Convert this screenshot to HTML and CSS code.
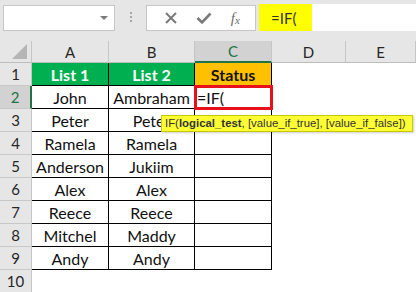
FILE: index.html
```html
<!DOCTYPE html>
<html lang="en">
<head>
    <meta charset="UTF-8">
    <title>IF formula</title>
    <link rel="stylesheet" href="styles.css">
</head>
<body>
    <div class="toolbar">
        <div class="name-box">
            <span class="drop-arrow"></span>
        </div>
        <div class="grip">
            <span></span><span></span><span></span>
        </div>
        <div class="fx-buttons">
            <svg class="icon" width="14" height="14" viewBox="0 0 14 14">
                <path d="M2 2 L12 12 M12 2 L2 12" stroke="#7a7a7a" stroke-width="2" fill="none"/>
            </svg>
            <svg class="icon" width="16" height="14" viewBox="0 0 16 14">
                <path d="M1.5 7 L6 11.5 L14.5 2.5" stroke="#7a7a7a" stroke-width="2.6" fill="none"/>
            </svg>
            <span class="fx">f<sub>x</sub></span>
        </div>
        <div class="formula">
            <span class="formula-text">=IF(</span>
        </div>
    </div>

    <div class="sheet">
        <div class="corner"><span class="corner-tri"></span></div>
        <div class="col-head">A</div>
        <div class="col-head">B</div>
        <div class="col-head selected">C</div>
        <div class="col-head">D</div>
        <div class="col-head">E</div>

        <div class="row-head">1</div>
        <div class="cell head green">List 1</div>
        <div class="cell head green">List 2</div>
        <div class="cell head gold">Status</div>
        <div class="empty"></div>
        <div class="empty"></div>

        <div class="row-head selected">2</div>
        <div class="cell">John</div>
        <div class="cell">Ambraham</div>
        <div class="cell active">=IF(</div>
        <div class="empty"></div>
        <div class="empty"></div>

        <div class="row-head">3</div>
        <div class="cell">Peter</div>
        <div class="cell">Peter</div>
        <div class="cell"></div>
        <div class="empty"></div>
        <div class="empty"></div>

        <div class="row-head">4</div>
        <div class="cell">Ramela</div>
        <div class="cell">Ramela</div>
        <div class="cell"></div>
        <div class="empty"></div>
        <div class="empty"></div>

        <div class="row-head">5</div>
        <div class="cell">Anderson</div>
        <div class="cell">Jukiim</div>
        <div class="cell"></div>
        <div class="empty"></div>
        <div class="empty"></div>

        <div class="row-head">6</div>
        <div class="cell">Alex</div>
        <div class="cell">Alex</div>
        <div class="cell"></div>
        <div class="empty"></div>
        <div class="empty"></div>

        <div class="row-head">7</div>
        <div class="cell">Reece</div>
        <div class="cell">Reece</div>
        <div class="cell"></div>
        <div class="empty"></div>
        <div class="empty"></div>

        <div class="row-head">8</div>
        <div class="cell">Mitchel</div>
        <div class="cell">Maddy</div>
        <div class="cell"></div>
        <div class="empty"></div>
        <div class="empty"></div>

        <div class="row-head">9</div>
        <div class="cell">Andy</div>
        <div class="cell">Andy</div>
        <div class="cell"></div>
        <div class="empty"></div>
        <div class="empty"></div>

        <div class="row-head last">10</div>

        <div class="tooltip">IF(<b>logical_test</b>, [value_if_true], [value_if_false])</div>
    </div>
</body>
</html>
```

FILE: styles.css
```css
body {
    margin: 0;
    width: 416px;
    height: 292px;
    overflow: hidden;
    background: white;
    font-family: Lato, "Open Sans", sans-serif;
}

/* formula bar */
.toolbar {
    height: 41px;
    background: #e6e6e6;
    display: flex;
    align-items: flex-start;
    box-sizing: border-box;
    padding: 4px 0 0 3px;
}

.name-box {
    width: 112px;
    height: 26px;
    margin-top: 1px;
    background: white;
    border: 1px solid #c6c6c6;
    box-sizing: border-box;
    display: flex;
    justify-content: flex-end;
    align-items: center;
    padding-right: 6px;
}

.drop-arrow {
    width: 0;
    height: 0;
    border-left: 4px solid transparent;
    border-right: 4px solid transparent;
    border-top: 4px solid #7b7b7b;
}

.grip {
    width: 31px;
    display: flex;
    flex-direction: column;
    align-items: center;
    gap: 2px;
    padding-top: 8px;
}

.grip span {
    width: 2px;
    height: 2px;
    background: #a6a6a6;
}

.fx-buttons {
    width: 110px;
    height: 26px;
    margin-top: 1px;
    background: white;
    border: 1px solid #c6c6c6;
    box-sizing: border-box;
    display: flex;
    align-items: center;
    justify-content: space-around;
    padding: 0 6px 0 8px;
}

.fx {
    font-family: "Liberation Serif", serif;
    font-style: italic;
    font-size: 15px;
    color: #6d6d6d;
    line-height: 1;
}

.fx sub {
    font-size: 11px;
    vertical-align: -1px;
}

.formula {
    flex: 1;
    height: 27px;
    margin-left: 3px;
    background: white;
    display: flex;
}

.formula-text {
    width: 53px;
    background: #ffff00;
    box-sizing: border-box;
    padding: 5px 0 0 12px;
    font-size: 15px;
    color: #333;
}

/* grid */
.sheet {
    position: relative;
    display: grid;
    grid-template-columns: 32px 77px 86px 77px 74px 1fr;
    grid-template-rows: 22px repeat(9, 23px) 23px;
    font-size: 16px;
}

.corner {
    background: #e6e6e6;
    border-right: 1px solid #c6c6c6;
    border-bottom: 1px solid #bdbdbd;
    position: relative;
}

.corner-tri {
    position: absolute;
    right: 4px;
    bottom: 3px;
    width: 0;
    height: 0;
    border-left: 15px solid transparent;
    border-bottom: 15px solid #b5b5b5;
}

.col-head {
    background: #e6e6e6;
    border-right: 1px solid #c6c6c6;
    border-bottom: 1px solid #bdbdbd;
    display: flex;
    justify-content: center;
    align-items: center;
    color: #262626;
    font-size: 15px;
}

.col-head.selected {
    background: #d2d2d2;
    color: #217346;
    border-bottom: 2px solid #217346;
}

.row-head {
    background: #e6e6e6;
    border-right: 1px solid #c6c6c6;
    border-bottom: 1px solid #c8c8c8;
    display: flex;
    justify-content: center;
    align-items: center;
    color: #262626;
    font-size: 15px;
}

.row-head.selected {
    background: #d2d2d2;
    color: #217346;
    border-right: 2px solid #217346;
}

.cell {
    border-right: 1px solid #000;
    border-bottom: 1px solid #000;
    display: flex;
    justify-content: center;
    align-items: center;
    color: #111;
    white-space: nowrap;
}

.cell.head {
    font-weight: bold;
}

.cell.green {
    background: #00b050;
    color: white;
}

.cell.gold {
    background: #ffc000;
    color: #111;
}

.cell.active {
    justify-content: flex-start;
    padding-left: 2px;
    outline: 3px solid #e8101b;
    outline-offset: -2px;
    position: relative;
    z-index: 1;
}

.tooltip {
    position: absolute;
    left: 161px;
    top: 74px;
    width: 252px;
    height: 17px;
    box-sizing: border-box;
    background: #ffff33;
    border: 1px solid #c8c800;
    box-shadow: 1px 1px 2px rgba(0, 0, 0, 0.2);
    font-family: "Liberation Sans", sans-serif;
    font-size: 11.4px;
    line-height: 15px;
    padding-left: 3px;
    color: #333;
    white-space: nowrap;
    z-index: 2;
}
```
